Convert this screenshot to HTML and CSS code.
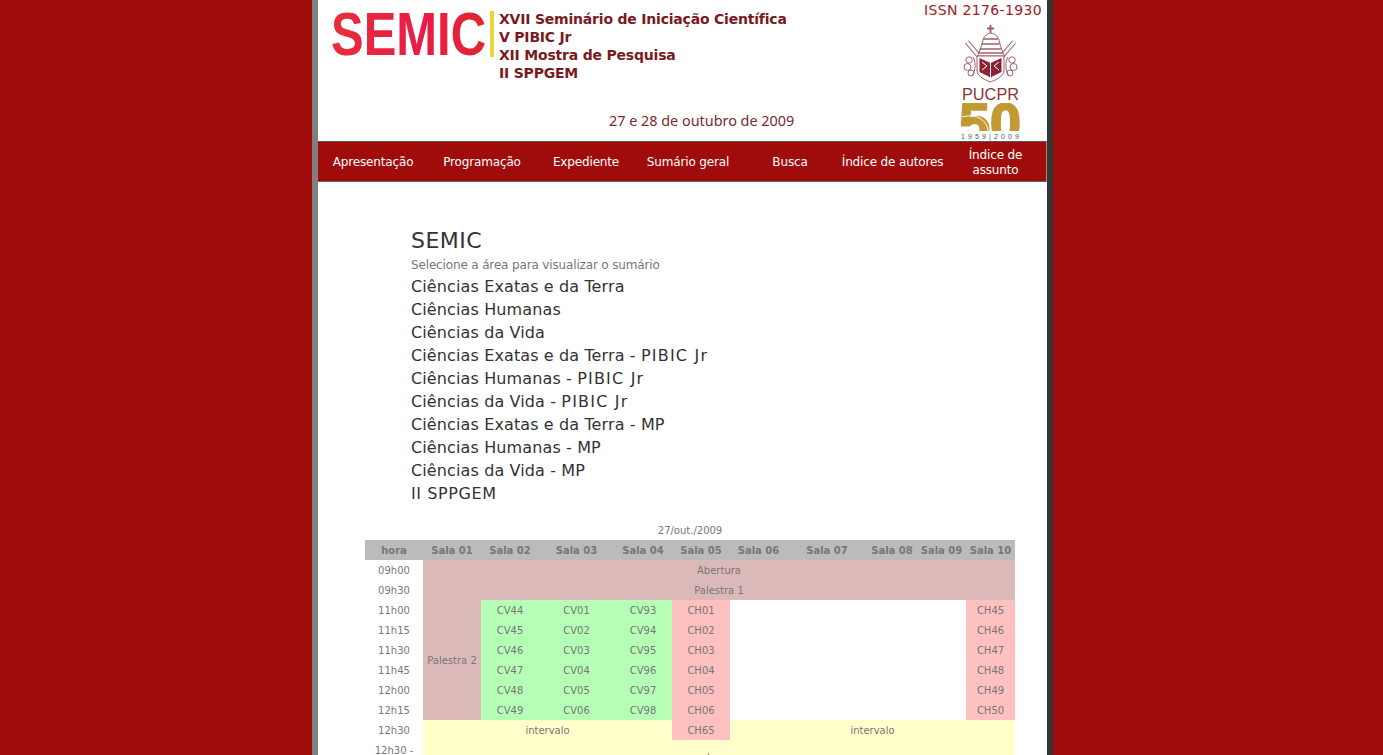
FILE: index.html
```html
<!DOCTYPE html>
<html lang="pt-BR">
<head>
    <meta charset="UTF-8">
    <title>SEMIC - Sumário</title>
    <link rel="stylesheet" href="styles.css">
</head>
<body>
    <div class="wrapper">
        <div class="header">
            <div class="header-left">
                <div class="logo-row">
                    <svg class="semic-logo" width="156" height="46" viewBox="0 0 156 46">
                        <defs>
                            <linearGradient id="semicGrad" x1="0" x2="1" y1="0" y2="0">
                                <stop offset="0" stop-color="#e5303c"/>
                                <stop offset="0.6" stop-color="#ea1b45"/>
                                <stop offset="1" stop-color="#dd2a2c"/>
                            </linearGradient>
                        </defs>
                        <text x="-2" y="43.500" class="semic-word" fill="url(#semicGrad)" textLength="155" lengthAdjust="spacingAndGlyphs">SEMIC</text>
                    </svg>
                    <div class="logo-bar"></div>
                    <div class="event-lines">
                        <div>XVII Seminário de Iniciação Científica</div>
                        <div>V PIBIC Jr</div>
                        <div>XII Mostra de Pesquisa</div>
                        <div>II SPPGEM</div>
                    </div>
                </div>
                <div class="event-date">27 e 28 de outubro de 2009</div>
            </div>
            <div class="header-right">
                <div class="issn">ISSN 2176-1930</div>
                <svg class="pucpr" width="80" height="121" viewBox="0 0 80 121">
                    <defs>
                        <clipPath id="fiftyClip"><rect x="0" y="83" width="80" height="28"/></clipPath>
                    </defs>
                    <!-- cross -->
                    <path d="M40.500 5v8M37 8.500h7" stroke="#9a5a60" stroke-width="1.800" fill="none"/>
                    <!-- keys -->
                    <path d="M17 22l16 19M64 22L48 41" stroke="#a0626a" stroke-width="5" fill="none"/>
                    <path d="M17 22l16 19M64 22L48 41" stroke="#fff" stroke-width="2.800" fill="none"/>
                    <!-- tiara -->
                    <path d="M40.500 13c-5 1-7 4-8 9-1 5-3 9-5 14h27c-2-5-4-9-5-14-1-5-3-8-9-9z" fill="#fff" stroke="#a0626a" stroke-width="1"/>
                    <path d="M33 19h15M31.500 24h18M29.500 29h22M28 33h25" stroke="#a0626a" stroke-width="1.300" fill="none"/>
                    <!-- scrolls -->
                    <g fill="none" stroke="#a0626a" stroke-width="1">
                        <circle cx="19" cy="40" r="3.200"/>
                        <circle cx="17.500" cy="47" r="3.500"/>
                        <circle cx="21" cy="53" r="3"/>
                        <circle cx="62" cy="40" r="3.200"/>
                        <circle cx="63.500" cy="47" r="3.500"/>
                        <circle cx="60" cy="53" r="3"/>
                        <path d="M23 37c3 5 3 13-1 19M58 37c-3 5-3 13 1 19"/>
                    </g>
                    <!-- shield -->
                    <path d="M27 36h27v14c0 6-6 9-13.500 12C33 59 27 56 27 50z" fill="#fff" stroke="#a0626a" stroke-width="1"/>
                    <path d="M29.500 38l11 5 11-5v14c-3 2-8 3-11 6-3-3-8-4-11-6z" fill="#8e2234"/>
                    <path d="M40.500 43v15M32 42l5 4-5 4M49 42l-5 4 5 4" stroke="#fff" stroke-width="1" fill="none"/>
                    <text x="12" y="80" class="pucpr-name" textLength="57" lengthAdjust="spacingAndGlyphs">PUCPR</text>
                    <g clip-path="url(#fiftyClip)">
                        <text x="9" y="122" class="pucpr-fifty" textLength="62" lengthAdjust="spacingAndGlyphs">50</text>
                    </g>
                    <path d="M12 97c14-4 25 3 26 14" stroke="#fff" stroke-width="1" fill="none"/>
                    <text x="11" y="118.500" class="pucpr-years" textLength="58">1959|2009</text>
                </svg>
            </div>
        </div>

        <div class="menu">
            <a href="#">Apresentação</a>
            <a href="#">Programação</a>
            <a href="#">Expediente</a>
            <a href="#">Sumário geral</a>
            <a href="#">Busca</a>
            <a href="#">Índice de autores</a>
            <a href="#">Índice de<br>assunto</a>
        </div>

        <div class="content">
            <h1>SEMIC</h1>
            <p class="hint">Selecione a área para visualizar o sumário</p>
            <ul class="areas">
                <li><a href="#">Ciências Exatas e da Terra</a></li>
                <li><a href="#">Ciências Humanas</a></li>
                <li><a href="#">Ciências da Vida</a></li>
                <li><a href="#">Ciências Exatas e da Terra - <span class="pibic">PIBIC Jr</span></a></li>
                <li><a href="#">Ciências Humanas - <span class="pibic">PIBIC Jr</span></a></li>
                <li><a href="#">Ciências da Vida - <span class="pibic">PIBIC Jr</span></a></li>
                <li><a href="#">Ciências Exatas e da Terra - MP</a></li>
                <li><a href="#">Ciências Humanas - MP</a></li>
                <li><a href="#">Ciências da Vida - MP</a></li>
                <li><a href="#" class="sppgem">II SPPGEM</a></li>
            </ul>

            <table class="schedule">
                <caption>27/out./2009</caption>
                <colgroup>
                    <col class="c58"><col class="c58"><col class="c58"><col class="c75"><col class="c58">
                    <col class="c58"><col class="c57"><col class="c80"><col class="c50"><col class="c49"><col class="c49">
                </colgroup>
                <tr>
                    <th>hora</th><th>Sala 01</th><th>Sala 02</th><th>Sala 03</th><th>Sala 04</th><th>Sala 05</th>
                    <th>Sala 06</th><th>Sala 07</th><th>Sala 08</th><th>Sala 09</th><th>Sala 10</th>
                </tr>
                <tr><td>09h00</td><td class="talk" colspan="10">Abertura</td></tr>
                <tr><td>09h30</td><td class="talk" colspan="10">Palestra 1</td></tr>
                <tr>
                    <td>11h00</td><td class="talk" rowspan="6">Palestra 2</td>
                    <td class="cv">CV44</td><td class="cv">CV01</td><td class="cv">CV93</td><td class="ch">CH01</td>
                    <td colspan="4" rowspan="6"></td><td class="ch">CH45</td>
                </tr>
                <tr>
                    <td>11h15</td><td class="cv">CV45</td><td class="cv">CV02</td><td class="cv">CV94</td><td class="ch">CH02</td><td class="ch">CH46</td>
                </tr>
                <tr>
                    <td>11h30</td><td class="cv">CV46</td><td class="cv">CV03</td><td class="cv">CV95</td><td class="ch">CH03</td><td class="ch">CH47</td>
                </tr>
                <tr>
                    <td>11h45</td><td class="cv">CV47</td><td class="cv">CV04</td><td class="cv">CV96</td><td class="ch">CH04</td><td class="ch">CH48</td>
                </tr>
                <tr>
                    <td>12h00</td><td class="cv">CV48</td><td class="cv">CV05</td><td class="cv">CV97</td><td class="ch">CH05</td><td class="ch">CH49</td>
                </tr>
                <tr>
                    <td>12h15</td><td class="cv">CV49</td><td class="cv">CV06</td><td class="cv">CV98</td><td class="ch">CH06</td><td class="ch">CH50</td>
                </tr>
                <tr>
                    <td>12h30</td><td class="pause" colspan="4">intervalo</td><td class="ch">CH65</td><td class="pause" colspan="5">intervalo</td>
                </tr>
                <tr>
                    <td>12h30 -<br>14h00</td><td class="pause" colspan="10">almoço</td>
                </tr>
            </table>
        </div>
    </div>
</body>
</html>
```

FILE: styles.css
```css
html, body {
    height: 100%;
    overflow: hidden;
}
body {
    margin: 0;
    background-color: #a00c0c;
    font-family: "DejaVu Sans", Verdana, sans-serif;
    color: #777;
}
.wrapper {
    width: 729px;
    height: 100%;
    margin-left: 312px;
    background: white;
    border-left: 6px solid #808080;
    border-right: 6px solid #333;
}

/* header */
.header {
    height: 141px;
    display: flex;
    justify-content: space-between;
}
.header-left {
    padding-left: 15px;
}
.logo-row {
    display: flex;
    padding-top: 10px;
}
.semic-logo {
    margin-top: 1px;
    overflow: visible;
}
.semic-word {
    font-family: "Liberation Sans", sans-serif;
    font-weight: bold;
    font-size: 61px;
}
.logo-bar {
    width: 4px;
    height: 46px;
    margin: 1px 5px 0 1px;
    background-color: #ecd43a;
}
.event-lines {
    font-size: 14px;
    font-weight: bold;
    letter-spacing: -0.2px;
    line-height: 18px;
    color: #7a1a1e;
}
.event-date {
    margin-top: 30px;
    padding-left: 276px;
    font-family: "Noto Sans", sans-serif;
    font-size: 14.400px;
    line-height: 18px;
    color: #7c2a2c;
}
.header-right {
    display: flex;
    flex-direction: column;
    align-items: flex-end;
    padding-right: 5px;
}
.issn {
    height: 20px;
    font-size: 14px;
    letter-spacing: 0.35px;
    line-height: 20px;
    color: #9c2126;
}
.pucpr {
    margin-right: 12px;
}
.pucpr-name {
    font-family: "Liberation Sans", sans-serif;
    font-size: 17px;
    fill: #8a3440;
}
.pucpr-fifty {
    font-family: "Liberation Sans", sans-serif;
    font-weight: bold;
    font-size: 56px;
    fill: #c29a32;
    stroke: #c29a32;
    stroke-width: 2px;
}
.pucpr-years {
    font-family: "Liberation Sans", sans-serif;
    font-size: 7px;
    fill: #555;
}

/* menu */
.menu {
    height: 39px;
    display: grid;
    grid-template-columns: 110px 108px 100px 104px 100px 105px 1fr;
    align-items: center;
    background-color: #a00c0c;
    border: 1px solid;
    border-color: #555 #b08080 #666;
    border-left: 0;
}
.menu a {
    padding-top: 2px;
    color: white;
    font-size: 12px;
    letter-spacing: -0.15px;
    line-height: 15px;
    text-align: center;
    text-decoration: none;
}

/* content */
.content {
    padding-top: 46px;
}
h1 {
    margin: 0 0 0 93px;
    font-size: 22px;
    font-weight: normal;
    letter-spacing: 0.5px;
    line-height: 26px;
    color: #333;
}
.hint {
    margin: 3px 0 0 93px;
    font-size: 12px;
    letter-spacing: -0.15px;
    line-height: 16px;
    color: #777;
}
.areas {
    margin: 2px 0 0 93px;
    padding: 0;
    list-style: none;
}
.areas li {
    height: 23px;
    font-size: 16px;
    letter-spacing: 0.12px;
    line-height: 23px;
}
.areas a {
    color: #333;
    text-decoration: none;
}
.areas .pibic {
    letter-spacing: 1.2px;
}
.areas .sppgem {
    letter-spacing: 0.6px;
}

/* schedule table */
.schedule {
    width: 650px;
    margin: 16px 0 0 47px;
    table-layout: fixed;
    border-collapse: collapse;
    font-size: 10px;
}
.schedule caption {
    height: 19px;
    line-height: 19px;
    color: #777;
}
.schedule th, .schedule td {
    padding: 4px 0 2px;
    line-height: 14px;
    text-align: center;
}
.schedule th {
    background-color: #bbb;
    font-weight: bold;
    color: #777;
}
.c58 { width: 58px; }
.c75 { width: 75px; }
.c57 { width: 57px; }
.c80 { width: 80px; }
.c50 { width: 50px; }
.c49 { width: 49px; }
.talk { background-color: #dcb9b9; }
.cv { background-color: #b6ffb6; }
.ch { background-color: #ffc0c0; }
.pause { background-color: #ffffcc; }
```
